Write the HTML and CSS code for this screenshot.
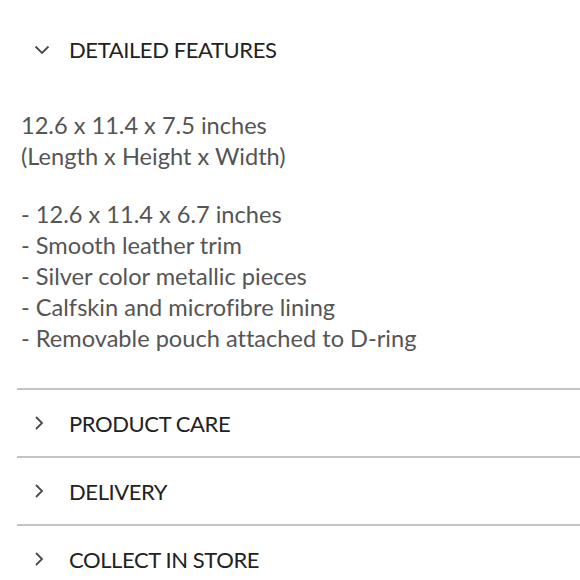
FILE: index.html
```html
<!DOCTYPE html>
<html lang="en">
<head>
  <meta charset="UTF-8" />
  <meta name="viewport" content="width=device-width, initial-scale=1.0"/>
  <title>Detailed features</title>
  <link rel="stylesheet" href="styles.css">
</head>
<body>
  <div class="accordion">
    <div class="item open">
      <div class="head">
        <svg class="chev" width="16" height="10" viewBox="0 0 16 10"><path d="M1.5 1.5 L8 8 L14.5 1.5" /></svg>
        <span>DETAILED FEATURES</span>
      </div>
      <div class="body">
        <p>12.6 x 11.4 x 7.5 inches<br>(Length x Height x Width)</p>
        <p>- 12.6 x 11.4 x 6.7 inches<br>- Smooth leather trim<br>- Silver color metallic pieces<br>- Calfskin and microfibre lining<br>- Removable pouch attached to D-ring</p>
      </div>
    </div>
    <div class="item">
      <div class="head">
        <svg class="chev right" width="10" height="16" viewBox="0 0 10 16"><path d="M2 2 L8 8 L2 14" /></svg>
        <span>PRODUCT CARE</span>
      </div>
    </div>
    <div class="item">
      <div class="head">
        <svg class="chev right" width="10" height="16" viewBox="0 0 10 16"><path d="M2 2 L8 8 L2 14" /></svg>
        <span>DELIVERY</span>
      </div>
    </div>
    <div class="item">
      <div class="head">
        <svg class="chev right" width="10" height="16" viewBox="0 0 10 16"><path d="M2 2 L8 8 L2 14" /></svg>
        <span>COLLECT IN STORE</span>
      </div>
    </div>
  </div>
</body>
</html>
```

FILE: styles.css
```css
* {
  margin: 0;
  padding: 0;
  box-sizing: border-box;
}

body {
  background: #fff;
  font-family: Lato, "Noto Sans", sans-serif;
  font-variant-ligatures: none;
  padding-left: 17px;
  padding-top: 15px;
}

.item {
  border-bottom: 2px solid #c4c4c4;
}

.item:last-child {
  border-bottom: none;
}

.head {
  height: 66px;
  display: flex;
  align-items: center;
  color: #222;
  font-size: 22px;
  letter-spacing: -0.4px;
}

.item.open .head {
  height: 69px;
}

.chev {
  fill: none;
  stroke: #4a4a4a;
  stroke-width: 1.8;
}

.item.open .chev {
  margin-left: 17px;
  margin-right: 19px;
}

.chev.right {
  margin-left: 17px;
  margin-right: 25px;
}

.body {
  padding: 26px 0 34px 4px;
  color: #555;
  font-size: 23.6px;
  line-height: 31px;
}

.body p + p {
  margin-top: 27px;
}
```
